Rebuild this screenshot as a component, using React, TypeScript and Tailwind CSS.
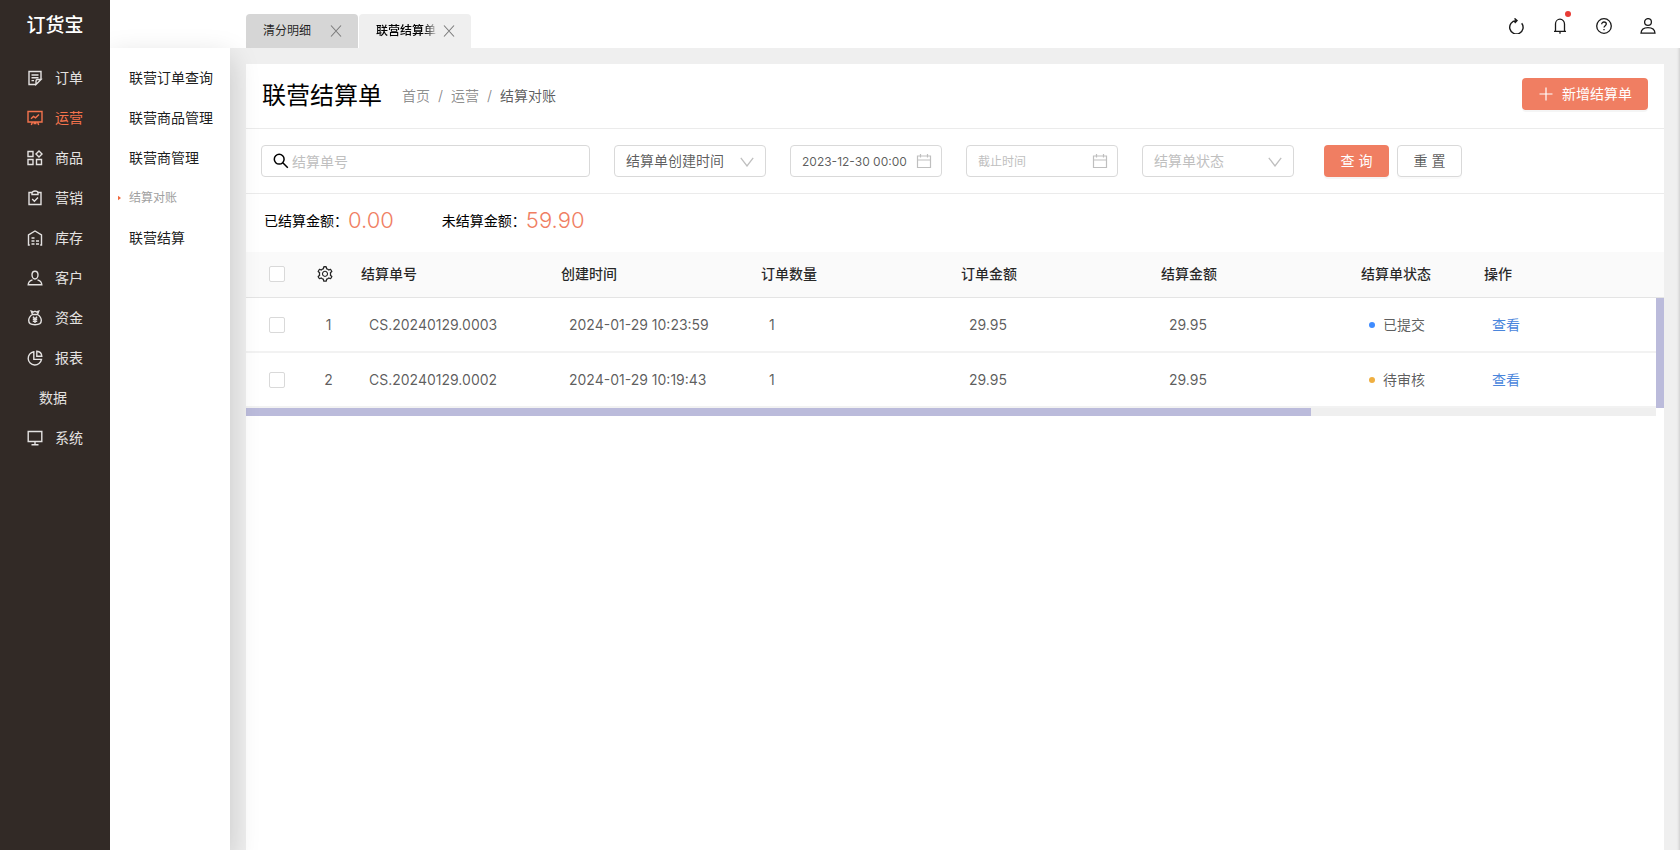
import { useState } from 'react';
import type { ReactNode } from 'react';
import { AiOutlineSetting } from 'react-icons/ai';

const menus = [
  { key: 'order', label: '订单' },
  { key: 'operate', label: '运营' },
  { key: 'goods', label: '商品' },
  { key: 'market', label: '营销' },
  { key: 'stock', label: '库存' },
  { key: 'customer', label: '客户' },
  { key: 'fund', label: '资金' },
  { key: 'report', label: '报表' },
  { key: 'data', label: '数据' },
  { key: 'system', label: '系统' },
];

const subMenus = ['联营订单查询', '联营商品管理', '联营商管理', '结算对账', '联营结算'];

const columns = ['结算单号', '创建时间', '订单数量', '订单金额', '结算金额', '结算单状态', '操作'];

const rows = [
  { no: 'CS.20240129.0003', time: '2024-01-29 10:23:59', count: 1, amount: '29.95', settle: '29.95', status: '已提交', dot: 'bg-[#3f8cff]' },
  { no: 'CS.20240129.0002', time: '2024-01-29 10:19:43', count: 1, amount: '29.95', settle: '29.95', status: '待审核', dot: 'bg-[#efaf41]' },
];

const menuIcons: Record<string, ReactNode> = {
  order: (
    <>
      <path d="M14 9.5V1.5H2v13h6.5M14 9.5l-5 5v-3.5a1.5 1.5 0 0 1 1.5-1.5z" />
      <path d="M4.5 5h7M4.5 7.8h7M4.5 10.6h2.5" />
    </>
  ),
  operate: (
    <>
      <path d="M1 1.5h14v10.5H1zM5.5 12l-1.2 3M10.5 12l1.2 3M6.5 13.5h3" />
      <path d="M4 8.8l2.5-2.3 2 1.3L12 4.5" />
    </>
  ),
  goods: (
    <>
      <path d="M1 1.5h5v5H1zM1 9.5h5v5H1zM9.5 9.5h5v5h-5z" />
      <path d="M12 1l3 3-3 3-3-3z" />
    </>
  ),
  market: (
    <>
      <path d="M5 2.5H2v12h12v-12h-3" />
      <path d="M5 4.5V3a3 2 0 0 1 6 0v1.5zM5.2 9l2.2 2.2 3.6-3.6" />
    </>
  ),
  stock: (
    <>
      <path d="M1.5 15V5L8 1l6.5 4v10M.8 15h2M13.2 15h2" />
      <path d="M4.5 8h3M4.5 11h3M4.5 14h3M9 11h3M9 14h3" />
    </>
  ),
  customer: (
    <>
      <path d="M8 1.2c2 0 3 1.5 3 3.6S9.8 9 8 9 5 6.9 5 4.8s1-3.6 3-3.6z" />
      <path d="M5.5 9.8C3 10.5 1.3 12.2 1.2 14.8h13.6c-.1-2.6-1.8-4.3-4.3-5" />
    </>
  ),
  fund: (
    <>
      <path d="M5.5 4.5 4.3 1.2l2.2.8L8 1.2l1.5.8 2.2-.8-1.2 3.3zM5.5 4.5C3 6 1.7 8 1.7 10.5c0 2.7 1.8 4.2 6.3 4.2s6.3-1.5 6.3-4.2c0-2.5-1.3-4.5-3.8-6" />
      <path d="M6 6.8l2 2.2 2-2.2M8 9v4M5.8 9.3h4.4M5.8 11.2h4.4" />
    </>
  ),
  report: (
    <>
      <path d="M6.8 1.7a6.7 6.7 0 1 0 7.7 7.7H6.8z" />
      <path d="M9.8 1.2v5h5c-.2-2.8-2.2-4.8-5-5z" />
    </>
  ),
  system: <path d="M1.2 1.5h13.6v10H1.2zM8 11.5v3M4.5 14.8h7" />,
};

function MenuIcon({ name }: { name: string }) {
  return (
    <svg viewBox="0 0 16 16" className="size-4 shrink-0" fill="none" stroke="currentColor" strokeWidth="1.4">
      {menuIcons[name]}
    </svg>
  );
}

function CloseIcon() {
  return (
    <svg viewBox="0 0 12 12" className="size-3" fill="none" stroke="#7a7a7a" strokeWidth="1.1">
      <path d="M1 .5l10 11M11 .5L1 11.5" />
    </svg>
  );
}

function DownIcon() {
  return (
    <svg viewBox="0 0 14 10" className="pointer-events-none absolute right-3 top-3 h-2.5 w-3.5" fill="none" stroke="#bfbfbf" strokeWidth="1.3">
      <path d="M.8.8L7 9l6.2-8.2" />
    </svg>
  );
}

function CalendarIcon() {
  return (
    <svg viewBox="0 0 16 16" className="pointer-events-none absolute right-2.5 top-2 size-4" fill="none" stroke="#bfbfbf" strokeWidth="1.2">
      <path d="M1.5 3h13v11.5h-13zM1.5 7h13M4.5 1v3.5M11.5 1v3.5" />
    </svg>
  );
}

const fieldClass = 'h-8 w-full min-w-0 appearance-none rounded border border-[#d9d9d9] bg-white outline-none placeholder:text-[#bfbfbf]';

function Checkbox({ label }: { label: string }) {
  return (
    <input
      type="checkbox"
      aria-label={label}
      className="block size-4 appearance-none rounded-xs border border-[#d9d9d9] bg-white checked:bg-[#f07e62]"
    />
  );
}

function Sidebar() {
  return (
    <aside className="z-20 flex w-[110px] shrink-0 flex-col bg-[#322a26] text-[#e4e2e1]">
      <div className="flex h-12 items-center justify-center pt-1 text-[19px] font-medium text-white">订货宝</div>
      <nav className="mt-2.5">
        {menus.map((menu) => (
          <a
            key={menu.key}
            href="#"
            className={`flex h-10 items-center gap-3 ${menu.key === 'operate' ? 'text-[#f4734d]' : ''} ${
              menu.key === 'data' ? 'pl-[39px]' : 'pl-[27px]'
            }`}
          >
            {menuIcons[menu.key] && <MenuIcon name={menu.key} />}
            <span>{menu.label}</span>
          </a>
        ))}
      </nav>
    </aside>
  );
}

function SubMenu() {
  return (
    <nav className="z-10 w-[120px] shrink-0 bg-white pt-2.5 text-black/90 shadow-[0_10px_28px_rgba(0,0,0,0.18)]">
      {subMenus.map((item) =>
        item === '结算对账' ? (
          <a key={item} href="#" className="flex h-10 items-center text-xs text-[#a0a0a0]">
            <svg viewBox="0 0 4 6" className="mr-2 ml-2 h-1.5 w-[3px]">
              <path d="M0 0l4 3-4 3z" fill="#f0693f" />
            </svg>
            {item}
          </a>
        ) : (
          <a key={item} href="#" className="flex h-10 items-center pl-[19px]">
            {item}
          </a>
        ),
      )}
    </nav>
  );
}

function Header() {
  return (
    <header className="flex h-12 shrink-0 items-end justify-between bg-white pl-[136px]">
      <div className="flex gap-px text-xs">
        <div className="flex h-[34px] w-28 items-center justify-between rounded-t bg-[#d6d6d6] pr-4 pl-[17px] text-black/85">
          <span>清分明细</span>
          <button aria-label="关闭清分明细"><CloseIcon /></button>
        </div>
        <div className="flex h-[34px] w-28 items-center justify-between rounded-t bg-[#efefef] pr-4 pl-[17px] text-black">
          <span className="w-[60px] overflow-hidden bg-linear-to-r from-black from-80% to-black/15 bg-clip-text font-medium whitespace-nowrap text-transparent">
            联营结算单
          </span>
          <button aria-label="关闭联营结算单"><CloseIcon /></button>
        </div>
      </div>
      <div className="flex h-11 items-center gap-7 pr-6 text-black/90">
        <button aria-label="刷新">
          <svg viewBox="0 0 16 16" className="size-4" fill="none" stroke="currentColor" strokeWidth="1.4">
            <path d="M13.7 5.2A6.7 6.7 0 1 1 8 2.6M6.5.4L9 2.6 6.7 4.9" />
          </svg>
        </button>
        <button aria-label="消息" className="relative">
          <svg viewBox="0 0 16 16" className="size-4" fill="none" stroke="currentColor" strokeWidth="1.3">
            <path d="M3.5 13.2V6a4.5 4.8 0 0 1 9 0v7.2M2 13.4h12M8 13.5v2.2" />
          </svg>
          <span className="absolute -top-[7px] right-[-3px] size-1.5 rounded-full bg-[#e83c36]" />
        </button>
        <button aria-label="帮助">
          <svg viewBox="0 0 16 16" className="size-4" fill="none" stroke="currentColor" strokeWidth="1.3">
            <circle cx="8" cy="8" r="7.3" />
            <path d="M5.7 6.2c0-1.3 1-2.2 2.3-2.2s2.3.9 2.3 2c0 1.7-2.3 1.7-2.3 3.6M8 10.9v1.3" />
          </svg>
        </button>
        <button aria-label="个人中心">
          <svg viewBox="0 0 16 16" className="size-4" fill="none" stroke="currentColor" strokeWidth="1.3">
            <circle cx="8" cy="4" r="3.4" />
            <path d="M1 15.2c.2-3.2 2.6-5.6 7-5.6s6.8 2.4 7 5.6z" />
          </svg>
        </button>
      </div>
    </header>
  );
}

function Filters() {
  const [keyword, setKeyword] = useState('');
  const [start, setStart] = useState('2023-12-30 00:00');
  const [end, setEnd] = useState('');

  return (
    <form className="grid grid-cols-[329fr_152fr_152fr_152fr_152fr_331fr] gap-6 border-b border-[#ebebeb] px-[15px] py-4">
      <div className="relative">
        <svg viewBox="0 0 16 16" className="absolute top-2 left-3 size-4" fill="none" stroke="#000" strokeWidth="1.5">
          <circle cx="6.2" cy="6.2" r="4.9" />
          <path d="M9.8 9.8l5 5" />
        </svg>
        <input aria-label="结算单号" placeholder="结算单号" value={keyword} onChange={(e) => setKeyword(e.target.value)} className={`${fieldClass} pl-[30px]`} />
      </div>
      <div className="relative">
        <select aria-label="时间类型" className={`${fieldClass} pr-7 pl-[11px]`}>
          <option>结算单创建时间</option>
        </select>
        <DownIcon />
      </div>
      <div className="relative">
        <input aria-label="开始时间" value={start} onChange={(e) => setStart(e.target.value)} className={`${fieldClass} pl-[11px] text-xs`} />
        <CalendarIcon />
      </div>
      <div className="relative">
        <input aria-label="截止时间" placeholder="截止时间" value={end} onChange={(e) => setEnd(e.target.value)} className={`${fieldClass} pl-[11px] text-xs`} />
        <CalendarIcon />
      </div>
      <div className="relative">
        <select aria-label="结算单状态" className={`${fieldClass} pr-7 pl-[11px] text-[#bfbfbf]`}>
          <option>结算单状态</option>
        </select>
        <DownIcon />
      </div>
      <div className="flex gap-2 pl-1.5">
        <button type="button" className="h-8 w-[65px] rounded bg-[#f07e62] text-white shadow-[0_2px_0_rgba(0,0,0,0.04)]">查 询</button>
        <button type="reset" className="h-8 w-[65px] rounded border border-[#d9d9d9] bg-white shadow-[0_2px_0_rgba(0,0,0,0.02)]">重 置</button>
      </div>
    </form>
  );
}

function SettlementTable() {
  return (
    <div className="relative">
      <table className="w-full table-fixed border-separate border-spacing-0 text-left">
        <colgroup>
          <col className="w-[54px]" />
          <col className="w-[53px]" />
          <col className="w-[200px]" />
          <col className="w-[200px]" />
          <col className="w-[200px]" />
          <col className="w-[200px]" />
          <col className="w-[200px]" />
          <col className="w-[123px]" />
          <col />
        </colgroup>
        <thead className="bg-[#fafafa] text-black/85">
          <tr className="h-[46px] *:border-b *:border-[#e4e4e4] *:pb-0.5">
            <th className="pl-[23px]"><Checkbox label="全选" /></th>
            <th className="pr-1">
              <button aria-label="列设置" className="mx-auto block"><AiOutlineSetting className="size-[18px]" /></button>
            </th>
            {columns.map((column) => (
              <th key={column} className="pl-2 font-medium">{column}</th>
            ))}
          </tr>
        </thead>
        <tbody>
          {rows.map((row, index) => (
            <tr key={row.no} className="h-[55px] *:border-b-2 *:border-[#f2f2f2]">
              <td className="pl-[23px]"><Checkbox label={row.no} /></td>
              <td className="pl-1 text-center">{index + 1}</td>
              <td className="pl-4">{row.no}</td>
              <td className="pl-4">{row.time}</td>
              <td className="pl-4">{row.count}</td>
              <td className="pl-4">{row.amount}</td>
              <td className="pl-4">{row.settle}</td>
              <td className="pl-4">
                <span className="flex items-center gap-2">
                  <span className={`size-1.5 rounded-full ${row.dot}`} />
                  {row.status}
                </span>
              </td>
              <td className="pl-4"><a href="#" className="text-[#4a86dc]">查看</a></td>
            </tr>
          ))}
        </tbody>
      </table>
      <div className="absolute top-[46px] right-0 bottom-2 w-2 bg-[#bbbbdb]" />
      <div className="mr-2 h-2 bg-[#efefef]">
        <div className="h-full w-[75.5%] bg-[#bbbbdb]" />
      </div>
    </div>
  );
}

export default function App() {
  return (
    <div className="flex min-h-screen bg-[#efefef] font-[Inter,'Noto_Sans_CJK_SC',sans-serif] text-sm text-black/65">
      <Sidebar />
      <div className="flex min-w-0 flex-1 flex-col">
        <Header />
        <div className="flex flex-1 shadow-[inset_-4px_0_3px_-3px_rgba(0,0,0,0.15)]">
          <SubMenu />
          <main className="mx-4 mt-4 min-w-0 flex-1 bg-white">
            <div className="flex h-[65px] items-center justify-between border-b border-[#ebebeb] px-4">
              <div className="flex items-center gap-5">
                <h1 className="text-2xl text-black">联营结算单</h1>
                <nav className="flex gap-2 text-black/45">
                  <a href="#">首页</a>
                  <span>/</span>
                  <a href="#">运营</a>
                  <span>/</span>
                  <span className="text-black/65">结算对账</span>
                </nav>
              </div>
              <button className="mb-1 flex h-8 items-center gap-2 rounded bg-[#f07e62] px-4 text-white shadow-[0_2px_0_rgba(0,0,0,0.04)]">
                <svg viewBox="0 0 16 16" className="size-4" fill="none" stroke="currentColor" strokeWidth="1.2">
                  <path d="M8 1.5v13M1.5 8h13" />
                </svg>
                新增结算单
              </button>
            </div>
            <Filters />
            <div className="flex h-[58px] items-center gap-12 pb-1 pl-[18px] text-black">
              <p className="flex items-center">
                已结算金额：<span className="text-[22px] font-light text-[#f07e62]">0.00</span>
              </p>
              <p className="flex items-center">
                未结算金额：<span className="text-[22px] font-light text-[#f07e62]">59.90</span>
              </p>
            </div>
            <SettlementTable />
          </main>
        </div>
      </div>
    </div>
  );
}
